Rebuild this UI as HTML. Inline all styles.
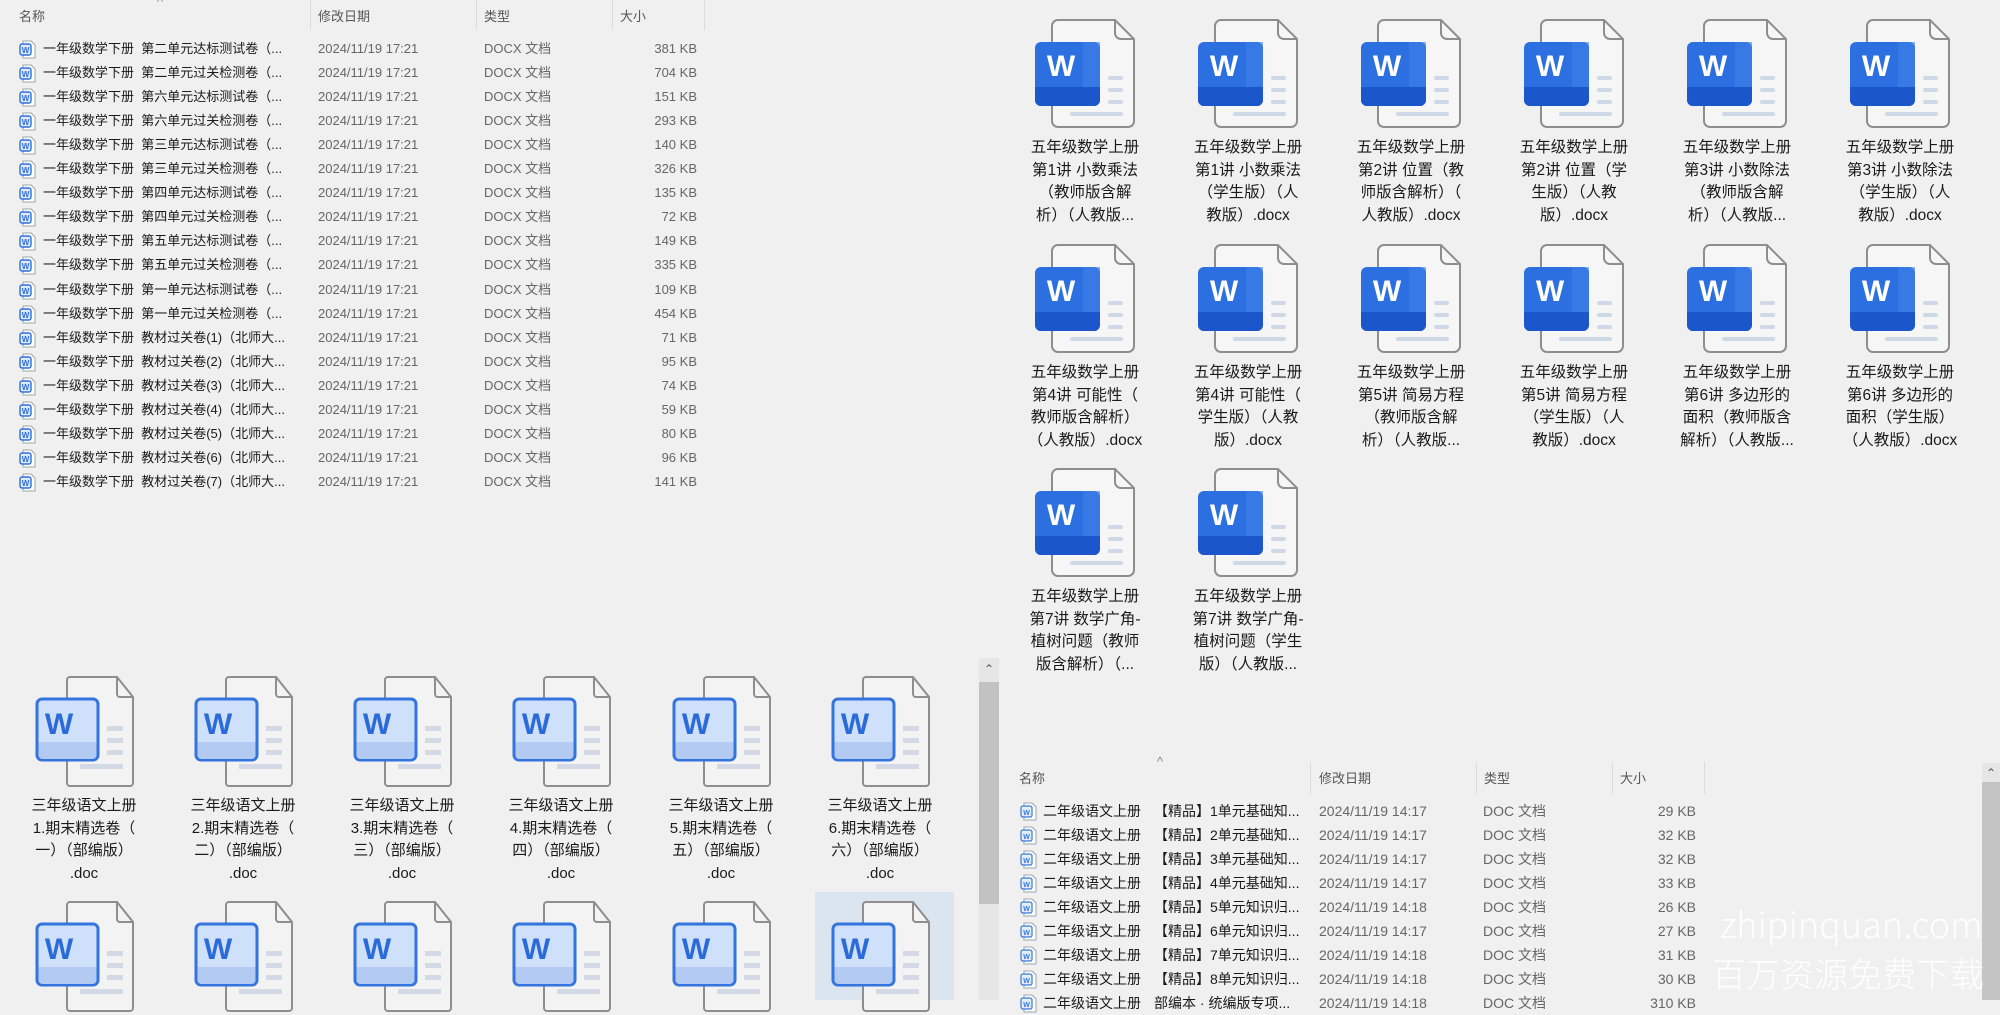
<!DOCTYPE html>
<html><head><meta charset="utf-8"><style>
*{margin:0;padding:0;box-sizing:border-box}
body{width:2000px;height:1000px;overflow:hidden;background:#f0f0f0;font-family:"Liberation Sans","Noto Sans CJK SC",sans-serif;position:relative;color:#1a1a1a}
.a{position:absolute}
.hd{position:absolute;font-size:13px;color:#555;white-space:nowrap}
.dv{position:absolute;width:1px;background:#dcdcdc}
.row{position:absolute;height:24px;line-height:24px;font-size:13px;white-space:nowrap}
.row svg{position:absolute;top:3px}
.row .n{position:absolute}
.row .d{position:absolute;color:#666}
.row .t{position:absolute;color:#666}
.row .s{position:absolute;text-align:right;color:#666}
.g{position:absolute;width:140px;text-align:center;font-size:15.5px;line-height:22.6px;white-space:nowrap;color:#1a1a1a}
.ic{position:absolute}
.wm{position:absolute;color:rgba(255,255,255,0.92);font-weight:300;white-space:nowrap}
</style></head><body>

<div class="hd" style="left:19px;top:6px">名称</div>
<div class="hd" style="left:157px;top:-6px;color:#888">^</div>
<div class="hd" style="left:318px;top:6px">修改日期</div>
<div class="hd" style="left:484px;top:6px">类型</div>
<div class="hd" style="left:620px;top:6px">大小</div>
<div class="dv" style="left:310px;top:0;height:30px"></div>
<div class="dv" style="left:476px;top:0;height:30px"></div>
<div class="dv" style="left:612px;top:0;height:30px"></div>
<div class="dv" style="left:704px;top:0;height:30px"></div>

<div class="a" style="left:0;top:37px;width:720px">
<div class="row" style="top:0px"><svg style="left:19px" width="17" height="19" viewBox="0 0 17 19"><path d="M4 1H12L16 5V18H4Z" fill="#fff" stroke="#9aa3ad"/><rect x="1" y="4" width="11" height="11" rx="2" fill="#dfe9fb" stroke="#2f6fdc" stroke-width="1.4"/><text x="6.5" y="13" font-size="8" font-weight="bold" fill="#2f6fdc" text-anchor="middle" font-family="Liberation Sans">W</text></svg><span class="n" style="left:43px">一年级数学下册&nbsp;&nbsp;第二单元达标测试卷（...</span><span class="d" style="left:318px">2024/11/19 17:21</span><span class="t" style="left:484px">DOCX 文档</span><span class="s" style="left:600px;width:97px">381 KB</span></div>
<div class="row" style="top:24.05px"><svg style="left:19px" width="17" height="19" viewBox="0 0 17 19"><path d="M4 1H12L16 5V18H4Z" fill="#fff" stroke="#9aa3ad"/><rect x="1" y="4" width="11" height="11" rx="2" fill="#dfe9fb" stroke="#2f6fdc" stroke-width="1.4"/><text x="6.5" y="13" font-size="8" font-weight="bold" fill="#2f6fdc" text-anchor="middle" font-family="Liberation Sans">W</text></svg><span class="n" style="left:43px">一年级数学下册&nbsp;&nbsp;第二单元过关检测卷（...</span><span class="d" style="left:318px">2024/11/19 17:21</span><span class="t" style="left:484px">DOCX 文档</span><span class="s" style="left:600px;width:97px">704 KB</span></div>
<div class="row" style="top:48.1px"><svg style="left:19px" width="17" height="19" viewBox="0 0 17 19"><path d="M4 1H12L16 5V18H4Z" fill="#fff" stroke="#9aa3ad"/><rect x="1" y="4" width="11" height="11" rx="2" fill="#dfe9fb" stroke="#2f6fdc" stroke-width="1.4"/><text x="6.5" y="13" font-size="8" font-weight="bold" fill="#2f6fdc" text-anchor="middle" font-family="Liberation Sans">W</text></svg><span class="n" style="left:43px">一年级数学下册&nbsp;&nbsp;第六单元达标测试卷（...</span><span class="d" style="left:318px">2024/11/19 17:21</span><span class="t" style="left:484px">DOCX 文档</span><span class="s" style="left:600px;width:97px">151 KB</span></div>
<div class="row" style="top:72.15px"><svg style="left:19px" width="17" height="19" viewBox="0 0 17 19"><path d="M4 1H12L16 5V18H4Z" fill="#fff" stroke="#9aa3ad"/><rect x="1" y="4" width="11" height="11" rx="2" fill="#dfe9fb" stroke="#2f6fdc" stroke-width="1.4"/><text x="6.5" y="13" font-size="8" font-weight="bold" fill="#2f6fdc" text-anchor="middle" font-family="Liberation Sans">W</text></svg><span class="n" style="left:43px">一年级数学下册&nbsp;&nbsp;第六单元过关检测卷（...</span><span class="d" style="left:318px">2024/11/19 17:21</span><span class="t" style="left:484px">DOCX 文档</span><span class="s" style="left:600px;width:97px">293 KB</span></div>
<div class="row" style="top:96.2px"><svg style="left:19px" width="17" height="19" viewBox="0 0 17 19"><path d="M4 1H12L16 5V18H4Z" fill="#fff" stroke="#9aa3ad"/><rect x="1" y="4" width="11" height="11" rx="2" fill="#dfe9fb" stroke="#2f6fdc" stroke-width="1.4"/><text x="6.5" y="13" font-size="8" font-weight="bold" fill="#2f6fdc" text-anchor="middle" font-family="Liberation Sans">W</text></svg><span class="n" style="left:43px">一年级数学下册&nbsp;&nbsp;第三单元达标测试卷（...</span><span class="d" style="left:318px">2024/11/19 17:21</span><span class="t" style="left:484px">DOCX 文档</span><span class="s" style="left:600px;width:97px">140 KB</span></div>
<div class="row" style="top:120.25px"><svg style="left:19px" width="17" height="19" viewBox="0 0 17 19"><path d="M4 1H12L16 5V18H4Z" fill="#fff" stroke="#9aa3ad"/><rect x="1" y="4" width="11" height="11" rx="2" fill="#dfe9fb" stroke="#2f6fdc" stroke-width="1.4"/><text x="6.5" y="13" font-size="8" font-weight="bold" fill="#2f6fdc" text-anchor="middle" font-family="Liberation Sans">W</text></svg><span class="n" style="left:43px">一年级数学下册&nbsp;&nbsp;第三单元过关检测卷（...</span><span class="d" style="left:318px">2024/11/19 17:21</span><span class="t" style="left:484px">DOCX 文档</span><span class="s" style="left:600px;width:97px">326 KB</span></div>
<div class="row" style="top:144.3px"><svg style="left:19px" width="17" height="19" viewBox="0 0 17 19"><path d="M4 1H12L16 5V18H4Z" fill="#fff" stroke="#9aa3ad"/><rect x="1" y="4" width="11" height="11" rx="2" fill="#dfe9fb" stroke="#2f6fdc" stroke-width="1.4"/><text x="6.5" y="13" font-size="8" font-weight="bold" fill="#2f6fdc" text-anchor="middle" font-family="Liberation Sans">W</text></svg><span class="n" style="left:43px">一年级数学下册&nbsp;&nbsp;第四单元达标测试卷（...</span><span class="d" style="left:318px">2024/11/19 17:21</span><span class="t" style="left:484px">DOCX 文档</span><span class="s" style="left:600px;width:97px">135 KB</span></div>
<div class="row" style="top:168.35px"><svg style="left:19px" width="17" height="19" viewBox="0 0 17 19"><path d="M4 1H12L16 5V18H4Z" fill="#fff" stroke="#9aa3ad"/><rect x="1" y="4" width="11" height="11" rx="2" fill="#dfe9fb" stroke="#2f6fdc" stroke-width="1.4"/><text x="6.5" y="13" font-size="8" font-weight="bold" fill="#2f6fdc" text-anchor="middle" font-family="Liberation Sans">W</text></svg><span class="n" style="left:43px">一年级数学下册&nbsp;&nbsp;第四单元过关检测卷（...</span><span class="d" style="left:318px">2024/11/19 17:21</span><span class="t" style="left:484px">DOCX 文档</span><span class="s" style="left:600px;width:97px">72 KB</span></div>
<div class="row" style="top:192.4px"><svg style="left:19px" width="17" height="19" viewBox="0 0 17 19"><path d="M4 1H12L16 5V18H4Z" fill="#fff" stroke="#9aa3ad"/><rect x="1" y="4" width="11" height="11" rx="2" fill="#dfe9fb" stroke="#2f6fdc" stroke-width="1.4"/><text x="6.5" y="13" font-size="8" font-weight="bold" fill="#2f6fdc" text-anchor="middle" font-family="Liberation Sans">W</text></svg><span class="n" style="left:43px">一年级数学下册&nbsp;&nbsp;第五单元达标测试卷（...</span><span class="d" style="left:318px">2024/11/19 17:21</span><span class="t" style="left:484px">DOCX 文档</span><span class="s" style="left:600px;width:97px">149 KB</span></div>
<div class="row" style="top:216.45px"><svg style="left:19px" width="17" height="19" viewBox="0 0 17 19"><path d="M4 1H12L16 5V18H4Z" fill="#fff" stroke="#9aa3ad"/><rect x="1" y="4" width="11" height="11" rx="2" fill="#dfe9fb" stroke="#2f6fdc" stroke-width="1.4"/><text x="6.5" y="13" font-size="8" font-weight="bold" fill="#2f6fdc" text-anchor="middle" font-family="Liberation Sans">W</text></svg><span class="n" style="left:43px">一年级数学下册&nbsp;&nbsp;第五单元过关检测卷（...</span><span class="d" style="left:318px">2024/11/19 17:21</span><span class="t" style="left:484px">DOCX 文档</span><span class="s" style="left:600px;width:97px">335 KB</span></div>
<div class="row" style="top:240.5px"><svg style="left:19px" width="17" height="19" viewBox="0 0 17 19"><path d="M4 1H12L16 5V18H4Z" fill="#fff" stroke="#9aa3ad"/><rect x="1" y="4" width="11" height="11" rx="2" fill="#dfe9fb" stroke="#2f6fdc" stroke-width="1.4"/><text x="6.5" y="13" font-size="8" font-weight="bold" fill="#2f6fdc" text-anchor="middle" font-family="Liberation Sans">W</text></svg><span class="n" style="left:43px">一年级数学下册&nbsp;&nbsp;第一单元达标测试卷（...</span><span class="d" style="left:318px">2024/11/19 17:21</span><span class="t" style="left:484px">DOCX 文档</span><span class="s" style="left:600px;width:97px">109 KB</span></div>
<div class="row" style="top:264.55px"><svg style="left:19px" width="17" height="19" viewBox="0 0 17 19"><path d="M4 1H12L16 5V18H4Z" fill="#fff" stroke="#9aa3ad"/><rect x="1" y="4" width="11" height="11" rx="2" fill="#dfe9fb" stroke="#2f6fdc" stroke-width="1.4"/><text x="6.5" y="13" font-size="8" font-weight="bold" fill="#2f6fdc" text-anchor="middle" font-family="Liberation Sans">W</text></svg><span class="n" style="left:43px">一年级数学下册&nbsp;&nbsp;第一单元过关检测卷（...</span><span class="d" style="left:318px">2024/11/19 17:21</span><span class="t" style="left:484px">DOCX 文档</span><span class="s" style="left:600px;width:97px">454 KB</span></div>
<div class="row" style="top:288.6px"><svg style="left:19px" width="17" height="19" viewBox="0 0 17 19"><path d="M4 1H12L16 5V18H4Z" fill="#fff" stroke="#9aa3ad"/><rect x="1" y="4" width="11" height="11" rx="2" fill="#dfe9fb" stroke="#2f6fdc" stroke-width="1.4"/><text x="6.5" y="13" font-size="8" font-weight="bold" fill="#2f6fdc" text-anchor="middle" font-family="Liberation Sans">W</text></svg><span class="n" style="left:43px">一年级数学下册&nbsp;&nbsp;教材过关卷(1)（北师大...</span><span class="d" style="left:318px">2024/11/19 17:21</span><span class="t" style="left:484px">DOCX 文档</span><span class="s" style="left:600px;width:97px">71 KB</span></div>
<div class="row" style="top:312.65px"><svg style="left:19px" width="17" height="19" viewBox="0 0 17 19"><path d="M4 1H12L16 5V18H4Z" fill="#fff" stroke="#9aa3ad"/><rect x="1" y="4" width="11" height="11" rx="2" fill="#dfe9fb" stroke="#2f6fdc" stroke-width="1.4"/><text x="6.5" y="13" font-size="8" font-weight="bold" fill="#2f6fdc" text-anchor="middle" font-family="Liberation Sans">W</text></svg><span class="n" style="left:43px">一年级数学下册&nbsp;&nbsp;教材过关卷(2)（北师大...</span><span class="d" style="left:318px">2024/11/19 17:21</span><span class="t" style="left:484px">DOCX 文档</span><span class="s" style="left:600px;width:97px">95 KB</span></div>
<div class="row" style="top:336.7px"><svg style="left:19px" width="17" height="19" viewBox="0 0 17 19"><path d="M4 1H12L16 5V18H4Z" fill="#fff" stroke="#9aa3ad"/><rect x="1" y="4" width="11" height="11" rx="2" fill="#dfe9fb" stroke="#2f6fdc" stroke-width="1.4"/><text x="6.5" y="13" font-size="8" font-weight="bold" fill="#2f6fdc" text-anchor="middle" font-family="Liberation Sans">W</text></svg><span class="n" style="left:43px">一年级数学下册&nbsp;&nbsp;教材过关卷(3)（北师大...</span><span class="d" style="left:318px">2024/11/19 17:21</span><span class="t" style="left:484px">DOCX 文档</span><span class="s" style="left:600px;width:97px">74 KB</span></div>
<div class="row" style="top:360.75px"><svg style="left:19px" width="17" height="19" viewBox="0 0 17 19"><path d="M4 1H12L16 5V18H4Z" fill="#fff" stroke="#9aa3ad"/><rect x="1" y="4" width="11" height="11" rx="2" fill="#dfe9fb" stroke="#2f6fdc" stroke-width="1.4"/><text x="6.5" y="13" font-size="8" font-weight="bold" fill="#2f6fdc" text-anchor="middle" font-family="Liberation Sans">W</text></svg><span class="n" style="left:43px">一年级数学下册&nbsp;&nbsp;教材过关卷(4)（北师大...</span><span class="d" style="left:318px">2024/11/19 17:21</span><span class="t" style="left:484px">DOCX 文档</span><span class="s" style="left:600px;width:97px">59 KB</span></div>
<div class="row" style="top:384.8px"><svg style="left:19px" width="17" height="19" viewBox="0 0 17 19"><path d="M4 1H12L16 5V18H4Z" fill="#fff" stroke="#9aa3ad"/><rect x="1" y="4" width="11" height="11" rx="2" fill="#dfe9fb" stroke="#2f6fdc" stroke-width="1.4"/><text x="6.5" y="13" font-size="8" font-weight="bold" fill="#2f6fdc" text-anchor="middle" font-family="Liberation Sans">W</text></svg><span class="n" style="left:43px">一年级数学下册&nbsp;&nbsp;教材过关卷(5)（北师大...</span><span class="d" style="left:318px">2024/11/19 17:21</span><span class="t" style="left:484px">DOCX 文档</span><span class="s" style="left:600px;width:97px">80 KB</span></div>
<div class="row" style="top:408.85px"><svg style="left:19px" width="17" height="19" viewBox="0 0 17 19"><path d="M4 1H12L16 5V18H4Z" fill="#fff" stroke="#9aa3ad"/><rect x="1" y="4" width="11" height="11" rx="2" fill="#dfe9fb" stroke="#2f6fdc" stroke-width="1.4"/><text x="6.5" y="13" font-size="8" font-weight="bold" fill="#2f6fdc" text-anchor="middle" font-family="Liberation Sans">W</text></svg><span class="n" style="left:43px">一年级数学下册&nbsp;&nbsp;教材过关卷(6)（北师大...</span><span class="d" style="left:318px">2024/11/19 17:21</span><span class="t" style="left:484px">DOCX 文档</span><span class="s" style="left:600px;width:97px">96 KB</span></div>
<div class="row" style="top:432.9px"><svg style="left:19px" width="17" height="19" viewBox="0 0 17 19"><path d="M4 1H12L16 5V18H4Z" fill="#fff" stroke="#9aa3ad"/><rect x="1" y="4" width="11" height="11" rx="2" fill="#dfe9fb" stroke="#2f6fdc" stroke-width="1.4"/><text x="6.5" y="13" font-size="8" font-weight="bold" fill="#2f6fdc" text-anchor="middle" font-family="Liberation Sans">W</text></svg><span class="n" style="left:43px">一年级数学下册&nbsp;&nbsp;教材过关卷(7)（北师大...</span><span class="d" style="left:318px">2024/11/19 17:21</span><span class="t" style="left:484px">DOCX 文档</span><span class="s" style="left:600px;width:97px">141 KB</span></div>
</div>

<div class="a" style="left:0;top:0">
<svg class="ic" style="left:1035px;top:19px" width="100" height="110" viewBox="0 0 100 110"><path d="M17 7a6 6 0 0 1 6-6H80L99 20V102a6 6 0 0 1-6 6H23a6 6 0 0 1-6-6Z" fill="#f6f6f6" stroke="#8e8e8e" stroke-width="2"/><path d="M80 1V14a6 6 0 0 0 6 6H99" fill="none" stroke="#8e8e8e" stroke-width="2"/><g fill="#cfd8e6"><rect x="73" y="57" width="15" height="4" rx="2"/><rect x="73" y="69" width="15" height="4" rx="2"/><rect x="73" y="81" width="15" height="4" rx="2"/><rect x="35" y="93" width="53" height="4" rx="2"/></g><rect x="0" y="23" width="65" height="64" rx="6" fill="#2c6fe0"/><path d="M0 68H65V81a6 6 0 0 1-6 6H6a6 6 0 0 1-6-6Z" fill="#1b56cb"/><rect x="48" y="23" width="17" height="45" fill="#3f80e8" opacity=".6"/><text x="26" y="57" font-size="30" font-weight="bold" fill="#fff" text-anchor="middle" font-family="Liberation Sans">W</text></svg>
<svg class="ic" style="left:1198px;top:19px" width="100" height="110" viewBox="0 0 100 110"><path d="M17 7a6 6 0 0 1 6-6H80L99 20V102a6 6 0 0 1-6 6H23a6 6 0 0 1-6-6Z" fill="#f6f6f6" stroke="#8e8e8e" stroke-width="2"/><path d="M80 1V14a6 6 0 0 0 6 6H99" fill="none" stroke="#8e8e8e" stroke-width="2"/><g fill="#cfd8e6"><rect x="73" y="57" width="15" height="4" rx="2"/><rect x="73" y="69" width="15" height="4" rx="2"/><rect x="73" y="81" width="15" height="4" rx="2"/><rect x="35" y="93" width="53" height="4" rx="2"/></g><rect x="0" y="23" width="65" height="64" rx="6" fill="#2c6fe0"/><path d="M0 68H65V81a6 6 0 0 1-6 6H6a6 6 0 0 1-6-6Z" fill="#1b56cb"/><rect x="48" y="23" width="17" height="45" fill="#3f80e8" opacity=".6"/><text x="26" y="57" font-size="30" font-weight="bold" fill="#fff" text-anchor="middle" font-family="Liberation Sans">W</text></svg>
<svg class="ic" style="left:1361px;top:19px" width="100" height="110" viewBox="0 0 100 110"><path d="M17 7a6 6 0 0 1 6-6H80L99 20V102a6 6 0 0 1-6 6H23a6 6 0 0 1-6-6Z" fill="#f6f6f6" stroke="#8e8e8e" stroke-width="2"/><path d="M80 1V14a6 6 0 0 0 6 6H99" fill="none" stroke="#8e8e8e" stroke-width="2"/><g fill="#cfd8e6"><rect x="73" y="57" width="15" height="4" rx="2"/><rect x="73" y="69" width="15" height="4" rx="2"/><rect x="73" y="81" width="15" height="4" rx="2"/><rect x="35" y="93" width="53" height="4" rx="2"/></g><rect x="0" y="23" width="65" height="64" rx="6" fill="#2c6fe0"/><path d="M0 68H65V81a6 6 0 0 1-6 6H6a6 6 0 0 1-6-6Z" fill="#1b56cb"/><rect x="48" y="23" width="17" height="45" fill="#3f80e8" opacity=".6"/><text x="26" y="57" font-size="30" font-weight="bold" fill="#fff" text-anchor="middle" font-family="Liberation Sans">W</text></svg>
<svg class="ic" style="left:1524px;top:19px" width="100" height="110" viewBox="0 0 100 110"><path d="M17 7a6 6 0 0 1 6-6H80L99 20V102a6 6 0 0 1-6 6H23a6 6 0 0 1-6-6Z" fill="#f6f6f6" stroke="#8e8e8e" stroke-width="2"/><path d="M80 1V14a6 6 0 0 0 6 6H99" fill="none" stroke="#8e8e8e" stroke-width="2"/><g fill="#cfd8e6"><rect x="73" y="57" width="15" height="4" rx="2"/><rect x="73" y="69" width="15" height="4" rx="2"/><rect x="73" y="81" width="15" height="4" rx="2"/><rect x="35" y="93" width="53" height="4" rx="2"/></g><rect x="0" y="23" width="65" height="64" rx="6" fill="#2c6fe0"/><path d="M0 68H65V81a6 6 0 0 1-6 6H6a6 6 0 0 1-6-6Z" fill="#1b56cb"/><rect x="48" y="23" width="17" height="45" fill="#3f80e8" opacity=".6"/><text x="26" y="57" font-size="30" font-weight="bold" fill="#fff" text-anchor="middle" font-family="Liberation Sans">W</text></svg>
<svg class="ic" style="left:1687px;top:19px" width="100" height="110" viewBox="0 0 100 110"><path d="M17 7a6 6 0 0 1 6-6H80L99 20V102a6 6 0 0 1-6 6H23a6 6 0 0 1-6-6Z" fill="#f6f6f6" stroke="#8e8e8e" stroke-width="2"/><path d="M80 1V14a6 6 0 0 0 6 6H99" fill="none" stroke="#8e8e8e" stroke-width="2"/><g fill="#cfd8e6"><rect x="73" y="57" width="15" height="4" rx="2"/><rect x="73" y="69" width="15" height="4" rx="2"/><rect x="73" y="81" width="15" height="4" rx="2"/><rect x="35" y="93" width="53" height="4" rx="2"/></g><rect x="0" y="23" width="65" height="64" rx="6" fill="#2c6fe0"/><path d="M0 68H65V81a6 6 0 0 1-6 6H6a6 6 0 0 1-6-6Z" fill="#1b56cb"/><rect x="48" y="23" width="17" height="45" fill="#3f80e8" opacity=".6"/><text x="26" y="57" font-size="30" font-weight="bold" fill="#fff" text-anchor="middle" font-family="Liberation Sans">W</text></svg>
<svg class="ic" style="left:1850px;top:19px" width="100" height="110" viewBox="0 0 100 110"><path d="M17 7a6 6 0 0 1 6-6H80L99 20V102a6 6 0 0 1-6 6H23a6 6 0 0 1-6-6Z" fill="#f6f6f6" stroke="#8e8e8e" stroke-width="2"/><path d="M80 1V14a6 6 0 0 0 6 6H99" fill="none" stroke="#8e8e8e" stroke-width="2"/><g fill="#cfd8e6"><rect x="73" y="57" width="15" height="4" rx="2"/><rect x="73" y="69" width="15" height="4" rx="2"/><rect x="73" y="81" width="15" height="4" rx="2"/><rect x="35" y="93" width="53" height="4" rx="2"/></g><rect x="0" y="23" width="65" height="64" rx="6" fill="#2c6fe0"/><path d="M0 68H65V81a6 6 0 0 1-6 6H6a6 6 0 0 1-6-6Z" fill="#1b56cb"/><rect x="48" y="23" width="17" height="45" fill="#3f80e8" opacity=".6"/><text x="26" y="57" font-size="30" font-weight="bold" fill="#fff" text-anchor="middle" font-family="Liberation Sans">W</text></svg>
<svg class="ic" style="left:1035px;top:244px" width="100" height="110" viewBox="0 0 100 110"><path d="M17 7a6 6 0 0 1 6-6H80L99 20V102a6 6 0 0 1-6 6H23a6 6 0 0 1-6-6Z" fill="#f6f6f6" stroke="#8e8e8e" stroke-width="2"/><path d="M80 1V14a6 6 0 0 0 6 6H99" fill="none" stroke="#8e8e8e" stroke-width="2"/><g fill="#cfd8e6"><rect x="73" y="57" width="15" height="4" rx="2"/><rect x="73" y="69" width="15" height="4" rx="2"/><rect x="73" y="81" width="15" height="4" rx="2"/><rect x="35" y="93" width="53" height="4" rx="2"/></g><rect x="0" y="23" width="65" height="64" rx="6" fill="#2c6fe0"/><path d="M0 68H65V81a6 6 0 0 1-6 6H6a6 6 0 0 1-6-6Z" fill="#1b56cb"/><rect x="48" y="23" width="17" height="45" fill="#3f80e8" opacity=".6"/><text x="26" y="57" font-size="30" font-weight="bold" fill="#fff" text-anchor="middle" font-family="Liberation Sans">W</text></svg>
<svg class="ic" style="left:1198px;top:244px" width="100" height="110" viewBox="0 0 100 110"><path d="M17 7a6 6 0 0 1 6-6H80L99 20V102a6 6 0 0 1-6 6H23a6 6 0 0 1-6-6Z" fill="#f6f6f6" stroke="#8e8e8e" stroke-width="2"/><path d="M80 1V14a6 6 0 0 0 6 6H99" fill="none" stroke="#8e8e8e" stroke-width="2"/><g fill="#cfd8e6"><rect x="73" y="57" width="15" height="4" rx="2"/><rect x="73" y="69" width="15" height="4" rx="2"/><rect x="73" y="81" width="15" height="4" rx="2"/><rect x="35" y="93" width="53" height="4" rx="2"/></g><rect x="0" y="23" width="65" height="64" rx="6" fill="#2c6fe0"/><path d="M0 68H65V81a6 6 0 0 1-6 6H6a6 6 0 0 1-6-6Z" fill="#1b56cb"/><rect x="48" y="23" width="17" height="45" fill="#3f80e8" opacity=".6"/><text x="26" y="57" font-size="30" font-weight="bold" fill="#fff" text-anchor="middle" font-family="Liberation Sans">W</text></svg>
<svg class="ic" style="left:1361px;top:244px" width="100" height="110" viewBox="0 0 100 110"><path d="M17 7a6 6 0 0 1 6-6H80L99 20V102a6 6 0 0 1-6 6H23a6 6 0 0 1-6-6Z" fill="#f6f6f6" stroke="#8e8e8e" stroke-width="2"/><path d="M80 1V14a6 6 0 0 0 6 6H99" fill="none" stroke="#8e8e8e" stroke-width="2"/><g fill="#cfd8e6"><rect x="73" y="57" width="15" height="4" rx="2"/><rect x="73" y="69" width="15" height="4" rx="2"/><rect x="73" y="81" width="15" height="4" rx="2"/><rect x="35" y="93" width="53" height="4" rx="2"/></g><rect x="0" y="23" width="65" height="64" rx="6" fill="#2c6fe0"/><path d="M0 68H65V81a6 6 0 0 1-6 6H6a6 6 0 0 1-6-6Z" fill="#1b56cb"/><rect x="48" y="23" width="17" height="45" fill="#3f80e8" opacity=".6"/><text x="26" y="57" font-size="30" font-weight="bold" fill="#fff" text-anchor="middle" font-family="Liberation Sans">W</text></svg>
<svg class="ic" style="left:1524px;top:244px" width="100" height="110" viewBox="0 0 100 110"><path d="M17 7a6 6 0 0 1 6-6H80L99 20V102a6 6 0 0 1-6 6H23a6 6 0 0 1-6-6Z" fill="#f6f6f6" stroke="#8e8e8e" stroke-width="2"/><path d="M80 1V14a6 6 0 0 0 6 6H99" fill="none" stroke="#8e8e8e" stroke-width="2"/><g fill="#cfd8e6"><rect x="73" y="57" width="15" height="4" rx="2"/><rect x="73" y="69" width="15" height="4" rx="2"/><rect x="73" y="81" width="15" height="4" rx="2"/><rect x="35" y="93" width="53" height="4" rx="2"/></g><rect x="0" y="23" width="65" height="64" rx="6" fill="#2c6fe0"/><path d="M0 68H65V81a6 6 0 0 1-6 6H6a6 6 0 0 1-6-6Z" fill="#1b56cb"/><rect x="48" y="23" width="17" height="45" fill="#3f80e8" opacity=".6"/><text x="26" y="57" font-size="30" font-weight="bold" fill="#fff" text-anchor="middle" font-family="Liberation Sans">W</text></svg>
<svg class="ic" style="left:1687px;top:244px" width="100" height="110" viewBox="0 0 100 110"><path d="M17 7a6 6 0 0 1 6-6H80L99 20V102a6 6 0 0 1-6 6H23a6 6 0 0 1-6-6Z" fill="#f6f6f6" stroke="#8e8e8e" stroke-width="2"/><path d="M80 1V14a6 6 0 0 0 6 6H99" fill="none" stroke="#8e8e8e" stroke-width="2"/><g fill="#cfd8e6"><rect x="73" y="57" width="15" height="4" rx="2"/><rect x="73" y="69" width="15" height="4" rx="2"/><rect x="73" y="81" width="15" height="4" rx="2"/><rect x="35" y="93" width="53" height="4" rx="2"/></g><rect x="0" y="23" width="65" height="64" rx="6" fill="#2c6fe0"/><path d="M0 68H65V81a6 6 0 0 1-6 6H6a6 6 0 0 1-6-6Z" fill="#1b56cb"/><rect x="48" y="23" width="17" height="45" fill="#3f80e8" opacity=".6"/><text x="26" y="57" font-size="30" font-weight="bold" fill="#fff" text-anchor="middle" font-family="Liberation Sans">W</text></svg>
<svg class="ic" style="left:1850px;top:244px" width="100" height="110" viewBox="0 0 100 110"><path d="M17 7a6 6 0 0 1 6-6H80L99 20V102a6 6 0 0 1-6 6H23a6 6 0 0 1-6-6Z" fill="#f6f6f6" stroke="#8e8e8e" stroke-width="2"/><path d="M80 1V14a6 6 0 0 0 6 6H99" fill="none" stroke="#8e8e8e" stroke-width="2"/><g fill="#cfd8e6"><rect x="73" y="57" width="15" height="4" rx="2"/><rect x="73" y="69" width="15" height="4" rx="2"/><rect x="73" y="81" width="15" height="4" rx="2"/><rect x="35" y="93" width="53" height="4" rx="2"/></g><rect x="0" y="23" width="65" height="64" rx="6" fill="#2c6fe0"/><path d="M0 68H65V81a6 6 0 0 1-6 6H6a6 6 0 0 1-6-6Z" fill="#1b56cb"/><rect x="48" y="23" width="17" height="45" fill="#3f80e8" opacity=".6"/><text x="26" y="57" font-size="30" font-weight="bold" fill="#fff" text-anchor="middle" font-family="Liberation Sans">W</text></svg>
<svg class="ic" style="left:1035px;top:468px" width="100" height="110" viewBox="0 0 100 110"><path d="M17 7a6 6 0 0 1 6-6H80L99 20V102a6 6 0 0 1-6 6H23a6 6 0 0 1-6-6Z" fill="#f6f6f6" stroke="#8e8e8e" stroke-width="2"/><path d="M80 1V14a6 6 0 0 0 6 6H99" fill="none" stroke="#8e8e8e" stroke-width="2"/><g fill="#cfd8e6"><rect x="73" y="57" width="15" height="4" rx="2"/><rect x="73" y="69" width="15" height="4" rx="2"/><rect x="73" y="81" width="15" height="4" rx="2"/><rect x="35" y="93" width="53" height="4" rx="2"/></g><rect x="0" y="23" width="65" height="64" rx="6" fill="#2c6fe0"/><path d="M0 68H65V81a6 6 0 0 1-6 6H6a6 6 0 0 1-6-6Z" fill="#1b56cb"/><rect x="48" y="23" width="17" height="45" fill="#3f80e8" opacity=".6"/><text x="26" y="57" font-size="30" font-weight="bold" fill="#fff" text-anchor="middle" font-family="Liberation Sans">W</text></svg>
<svg class="ic" style="left:1198px;top:468px" width="100" height="110" viewBox="0 0 100 110"><path d="M17 7a6 6 0 0 1 6-6H80L99 20V102a6 6 0 0 1-6 6H23a6 6 0 0 1-6-6Z" fill="#f6f6f6" stroke="#8e8e8e" stroke-width="2"/><path d="M80 1V14a6 6 0 0 0 6 6H99" fill="none" stroke="#8e8e8e" stroke-width="2"/><g fill="#cfd8e6"><rect x="73" y="57" width="15" height="4" rx="2"/><rect x="73" y="69" width="15" height="4" rx="2"/><rect x="73" y="81" width="15" height="4" rx="2"/><rect x="35" y="93" width="53" height="4" rx="2"/></g><rect x="0" y="23" width="65" height="64" rx="6" fill="#2c6fe0"/><path d="M0 68H65V81a6 6 0 0 1-6 6H6a6 6 0 0 1-6-6Z" fill="#1b56cb"/><rect x="48" y="23" width="17" height="45" fill="#3f80e8" opacity=".6"/><text x="26" y="57" font-size="30" font-weight="bold" fill="#fff" text-anchor="middle" font-family="Liberation Sans">W</text></svg>
</div>

<div class="g" style="left:1015px;top:137px">五年级数学上册<br>第1讲 小数乘法<br>（教师版含解<br>析）（人教版...</div>
<div class="g" style="left:1178px;top:137px">五年级数学上册<br>第1讲 小数乘法<br>（学生版）（人<br>教版）.docx</div>
<div class="g" style="left:1341px;top:137px">五年级数学上册<br>第2讲 位置（教<br>师版含解析）（<br>人教版）.docx</div>
<div class="g" style="left:1504px;top:137px">五年级数学上册<br>第2讲 位置（学<br>生版）（人教<br>版）.docx</div>
<div class="g" style="left:1667px;top:137px">五年级数学上册<br>第3讲 小数除法<br>（教师版含解<br>析）（人教版...</div>
<div class="g" style="left:1830px;top:137px">五年级数学上册<br>第3讲 小数除法<br>（学生版）（人<br>教版）.docx</div>

<div class="g" style="left:1015px;top:362px">五年级数学上册<br>第4讲 可能性（<br>教师版含解析）<br>（人教版）.docx</div>
<div class="g" style="left:1178px;top:362px">五年级数学上册<br>第4讲 可能性（<br>学生版）（人教<br>版）.docx</div>
<div class="g" style="left:1341px;top:362px">五年级数学上册<br>第5讲 简易方程<br>（教师版含解<br>析）（人教版...</div>
<div class="g" style="left:1504px;top:362px">五年级数学上册<br>第5讲 简易方程<br>（学生版）（人<br>教版）.docx</div>
<div class="g" style="left:1667px;top:362px">五年级数学上册<br>第6讲 多边形的<br>面积（教师版含<br>解析）（人教版...</div>
<div class="g" style="left:1830px;top:362px">五年级数学上册<br>第6讲 多边形的<br>面积（学生版）<br>（人教版）.docx</div>

<div class="g" style="left:1015px;top:586px">五年级数学上册<br>第7讲 数学广角-<br>植树问题（教师<br>版含解析）（...</div>
<div class="g" style="left:1178px;top:586px">五年级数学上册<br>第7讲 数学广角-<br>植树问题（学生<br>版）（人教版...</div>

<div class="a" style="left:815px;top:892px;width:139px;height:108px;background:#dae5f0"></div>
<div class="a" style="left:0;top:0">
<svg class="ic" style="left:35px;top:676px" width="100" height="112" viewBox="0 0 100 112"><path d="M32 4a3 3 0 0 1 3-3H82L98 21V107a3 3 0 0 1-3 3H35a3 3 0 0 1-3-3Z" fill="#f3f3f3" stroke="#8e8e8e" stroke-width="2"/><path d="M82 1V18a3 3 0 0 0 3 3H98" fill="none" stroke="#8e8e8e" stroke-width="2"/><g fill="#d3dae5"><rect x="72" y="50" width="16" height="5"/><rect x="72" y="62" width="16" height="5"/><rect x="72" y="74" width="16" height="5"/><rect x="45" y="88" width="43" height="5"/></g><rect x="2" y="23" width="61" height="61" rx="5" fill="#cfe0fa" stroke="#3374de" stroke-width="3"/><path d="M3.5 66H61.5V79a4 4 0 0 1-4 4H7.5a4 4 0 0 1-4-4Z" fill="#b3cbf2"/><text x="24" y="58" font-size="30" font-weight="bold" fill="#2a6ad9" text-anchor="middle" font-family="Liberation Sans">W</text></svg>
<svg class="ic" style="left:194px;top:676px" width="100" height="112" viewBox="0 0 100 112"><path d="M32 4a3 3 0 0 1 3-3H82L98 21V107a3 3 0 0 1-3 3H35a3 3 0 0 1-3-3Z" fill="#f3f3f3" stroke="#8e8e8e" stroke-width="2"/><path d="M82 1V18a3 3 0 0 0 3 3H98" fill="none" stroke="#8e8e8e" stroke-width="2"/><g fill="#d3dae5"><rect x="72" y="50" width="16" height="5"/><rect x="72" y="62" width="16" height="5"/><rect x="72" y="74" width="16" height="5"/><rect x="45" y="88" width="43" height="5"/></g><rect x="2" y="23" width="61" height="61" rx="5" fill="#cfe0fa" stroke="#3374de" stroke-width="3"/><path d="M3.5 66H61.5V79a4 4 0 0 1-4 4H7.5a4 4 0 0 1-4-4Z" fill="#b3cbf2"/><text x="24" y="58" font-size="30" font-weight="bold" fill="#2a6ad9" text-anchor="middle" font-family="Liberation Sans">W</text></svg>
<svg class="ic" style="left:353px;top:676px" width="100" height="112" viewBox="0 0 100 112"><path d="M32 4a3 3 0 0 1 3-3H82L98 21V107a3 3 0 0 1-3 3H35a3 3 0 0 1-3-3Z" fill="#f3f3f3" stroke="#8e8e8e" stroke-width="2"/><path d="M82 1V18a3 3 0 0 0 3 3H98" fill="none" stroke="#8e8e8e" stroke-width="2"/><g fill="#d3dae5"><rect x="72" y="50" width="16" height="5"/><rect x="72" y="62" width="16" height="5"/><rect x="72" y="74" width="16" height="5"/><rect x="45" y="88" width="43" height="5"/></g><rect x="2" y="23" width="61" height="61" rx="5" fill="#cfe0fa" stroke="#3374de" stroke-width="3"/><path d="M3.5 66H61.5V79a4 4 0 0 1-4 4H7.5a4 4 0 0 1-4-4Z" fill="#b3cbf2"/><text x="24" y="58" font-size="30" font-weight="bold" fill="#2a6ad9" text-anchor="middle" font-family="Liberation Sans">W</text></svg>
<svg class="ic" style="left:512px;top:676px" width="100" height="112" viewBox="0 0 100 112"><path d="M32 4a3 3 0 0 1 3-3H82L98 21V107a3 3 0 0 1-3 3H35a3 3 0 0 1-3-3Z" fill="#f3f3f3" stroke="#8e8e8e" stroke-width="2"/><path d="M82 1V18a3 3 0 0 0 3 3H98" fill="none" stroke="#8e8e8e" stroke-width="2"/><g fill="#d3dae5"><rect x="72" y="50" width="16" height="5"/><rect x="72" y="62" width="16" height="5"/><rect x="72" y="74" width="16" height="5"/><rect x="45" y="88" width="43" height="5"/></g><rect x="2" y="23" width="61" height="61" rx="5" fill="#cfe0fa" stroke="#3374de" stroke-width="3"/><path d="M3.5 66H61.5V79a4 4 0 0 1-4 4H7.5a4 4 0 0 1-4-4Z" fill="#b3cbf2"/><text x="24" y="58" font-size="30" font-weight="bold" fill="#2a6ad9" text-anchor="middle" font-family="Liberation Sans">W</text></svg>
<svg class="ic" style="left:672px;top:676px" width="100" height="112" viewBox="0 0 100 112"><path d="M32 4a3 3 0 0 1 3-3H82L98 21V107a3 3 0 0 1-3 3H35a3 3 0 0 1-3-3Z" fill="#f3f3f3" stroke="#8e8e8e" stroke-width="2"/><path d="M82 1V18a3 3 0 0 0 3 3H98" fill="none" stroke="#8e8e8e" stroke-width="2"/><g fill="#d3dae5"><rect x="72" y="50" width="16" height="5"/><rect x="72" y="62" width="16" height="5"/><rect x="72" y="74" width="16" height="5"/><rect x="45" y="88" width="43" height="5"/></g><rect x="2" y="23" width="61" height="61" rx="5" fill="#cfe0fa" stroke="#3374de" stroke-width="3"/><path d="M3.5 66H61.5V79a4 4 0 0 1-4 4H7.5a4 4 0 0 1-4-4Z" fill="#b3cbf2"/><text x="24" y="58" font-size="30" font-weight="bold" fill="#2a6ad9" text-anchor="middle" font-family="Liberation Sans">W</text></svg>
<svg class="ic" style="left:831px;top:676px" width="100" height="112" viewBox="0 0 100 112"><path d="M32 4a3 3 0 0 1 3-3H82L98 21V107a3 3 0 0 1-3 3H35a3 3 0 0 1-3-3Z" fill="#f3f3f3" stroke="#8e8e8e" stroke-width="2"/><path d="M82 1V18a3 3 0 0 0 3 3H98" fill="none" stroke="#8e8e8e" stroke-width="2"/><g fill="#d3dae5"><rect x="72" y="50" width="16" height="5"/><rect x="72" y="62" width="16" height="5"/><rect x="72" y="74" width="16" height="5"/><rect x="45" y="88" width="43" height="5"/></g><rect x="2" y="23" width="61" height="61" rx="5" fill="#cfe0fa" stroke="#3374de" stroke-width="3"/><path d="M3.5 66H61.5V79a4 4 0 0 1-4 4H7.5a4 4 0 0 1-4-4Z" fill="#b3cbf2"/><text x="24" y="58" font-size="30" font-weight="bold" fill="#2a6ad9" text-anchor="middle" font-family="Liberation Sans">W</text></svg>
<svg class="ic" style="left:35px;top:901px" width="100" height="112" viewBox="0 0 100 112"><path d="M32 4a3 3 0 0 1 3-3H82L98 21V107a3 3 0 0 1-3 3H35a3 3 0 0 1-3-3Z" fill="#f3f3f3" stroke="#8e8e8e" stroke-width="2"/><path d="M82 1V18a3 3 0 0 0 3 3H98" fill="none" stroke="#8e8e8e" stroke-width="2"/><g fill="#d3dae5"><rect x="72" y="50" width="16" height="5"/><rect x="72" y="62" width="16" height="5"/><rect x="72" y="74" width="16" height="5"/><rect x="45" y="88" width="43" height="5"/></g><rect x="2" y="23" width="61" height="61" rx="5" fill="#cfe0fa" stroke="#3374de" stroke-width="3"/><path d="M3.5 66H61.5V79a4 4 0 0 1-4 4H7.5a4 4 0 0 1-4-4Z" fill="#b3cbf2"/><text x="24" y="58" font-size="30" font-weight="bold" fill="#2a6ad9" text-anchor="middle" font-family="Liberation Sans">W</text></svg>
<svg class="ic" style="left:194px;top:901px" width="100" height="112" viewBox="0 0 100 112"><path d="M32 4a3 3 0 0 1 3-3H82L98 21V107a3 3 0 0 1-3 3H35a3 3 0 0 1-3-3Z" fill="#f3f3f3" stroke="#8e8e8e" stroke-width="2"/><path d="M82 1V18a3 3 0 0 0 3 3H98" fill="none" stroke="#8e8e8e" stroke-width="2"/><g fill="#d3dae5"><rect x="72" y="50" width="16" height="5"/><rect x="72" y="62" width="16" height="5"/><rect x="72" y="74" width="16" height="5"/><rect x="45" y="88" width="43" height="5"/></g><rect x="2" y="23" width="61" height="61" rx="5" fill="#cfe0fa" stroke="#3374de" stroke-width="3"/><path d="M3.5 66H61.5V79a4 4 0 0 1-4 4H7.5a4 4 0 0 1-4-4Z" fill="#b3cbf2"/><text x="24" y="58" font-size="30" font-weight="bold" fill="#2a6ad9" text-anchor="middle" font-family="Liberation Sans">W</text></svg>
<svg class="ic" style="left:353px;top:901px" width="100" height="112" viewBox="0 0 100 112"><path d="M32 4a3 3 0 0 1 3-3H82L98 21V107a3 3 0 0 1-3 3H35a3 3 0 0 1-3-3Z" fill="#f3f3f3" stroke="#8e8e8e" stroke-width="2"/><path d="M82 1V18a3 3 0 0 0 3 3H98" fill="none" stroke="#8e8e8e" stroke-width="2"/><g fill="#d3dae5"><rect x="72" y="50" width="16" height="5"/><rect x="72" y="62" width="16" height="5"/><rect x="72" y="74" width="16" height="5"/><rect x="45" y="88" width="43" height="5"/></g><rect x="2" y="23" width="61" height="61" rx="5" fill="#cfe0fa" stroke="#3374de" stroke-width="3"/><path d="M3.5 66H61.5V79a4 4 0 0 1-4 4H7.5a4 4 0 0 1-4-4Z" fill="#b3cbf2"/><text x="24" y="58" font-size="30" font-weight="bold" fill="#2a6ad9" text-anchor="middle" font-family="Liberation Sans">W</text></svg>
<svg class="ic" style="left:512px;top:901px" width="100" height="112" viewBox="0 0 100 112"><path d="M32 4a3 3 0 0 1 3-3H82L98 21V107a3 3 0 0 1-3 3H35a3 3 0 0 1-3-3Z" fill="#f3f3f3" stroke="#8e8e8e" stroke-width="2"/><path d="M82 1V18a3 3 0 0 0 3 3H98" fill="none" stroke="#8e8e8e" stroke-width="2"/><g fill="#d3dae5"><rect x="72" y="50" width="16" height="5"/><rect x="72" y="62" width="16" height="5"/><rect x="72" y="74" width="16" height="5"/><rect x="45" y="88" width="43" height="5"/></g><rect x="2" y="23" width="61" height="61" rx="5" fill="#cfe0fa" stroke="#3374de" stroke-width="3"/><path d="M3.5 66H61.5V79a4 4 0 0 1-4 4H7.5a4 4 0 0 1-4-4Z" fill="#b3cbf2"/><text x="24" y="58" font-size="30" font-weight="bold" fill="#2a6ad9" text-anchor="middle" font-family="Liberation Sans">W</text></svg>
<svg class="ic" style="left:672px;top:901px" width="100" height="112" viewBox="0 0 100 112"><path d="M32 4a3 3 0 0 1 3-3H82L98 21V107a3 3 0 0 1-3 3H35a3 3 0 0 1-3-3Z" fill="#f3f3f3" stroke="#8e8e8e" stroke-width="2"/><path d="M82 1V18a3 3 0 0 0 3 3H98" fill="none" stroke="#8e8e8e" stroke-width="2"/><g fill="#d3dae5"><rect x="72" y="50" width="16" height="5"/><rect x="72" y="62" width="16" height="5"/><rect x="72" y="74" width="16" height="5"/><rect x="45" y="88" width="43" height="5"/></g><rect x="2" y="23" width="61" height="61" rx="5" fill="#cfe0fa" stroke="#3374de" stroke-width="3"/><path d="M3.5 66H61.5V79a4 4 0 0 1-4 4H7.5a4 4 0 0 1-4-4Z" fill="#b3cbf2"/><text x="24" y="58" font-size="30" font-weight="bold" fill="#2a6ad9" text-anchor="middle" font-family="Liberation Sans">W</text></svg>
<svg class="ic" style="left:831px;top:901px" width="100" height="112" viewBox="0 0 100 112"><path d="M32 4a3 3 0 0 1 3-3H82L98 21V107a3 3 0 0 1-3 3H35a3 3 0 0 1-3-3Z" fill="#f3f3f3" stroke="#8e8e8e" stroke-width="2"/><path d="M82 1V18a3 3 0 0 0 3 3H98" fill="none" stroke="#8e8e8e" stroke-width="2"/><g fill="#d3dae5"><rect x="72" y="50" width="16" height="5"/><rect x="72" y="62" width="16" height="5"/><rect x="72" y="74" width="16" height="5"/><rect x="45" y="88" width="43" height="5"/></g><rect x="2" y="23" width="61" height="61" rx="5" fill="#cfe0fa" stroke="#3374de" stroke-width="3"/><path d="M3.5 66H61.5V79a4 4 0 0 1-4 4H7.5a4 4 0 0 1-4-4Z" fill="#b3cbf2"/><text x="24" y="58" font-size="30" font-weight="bold" fill="#2a6ad9" text-anchor="middle" font-family="Liberation Sans">W</text></svg>
</div>

<div class="g" style="left:14px;top:795px;font-size:15px">三年级语文上册<br>1.期末精选卷（<br>一）（部编版）<br>.doc</div>
<div class="g" style="left:173px;top:795px;font-size:15px">三年级语文上册<br>2.期末精选卷（<br>二）（部编版）<br>.doc</div>
<div class="g" style="left:332px;top:795px;font-size:15px">三年级语文上册<br>3.期末精选卷（<br>三）（部编版）<br>.doc</div>
<div class="g" style="left:491px;top:795px;font-size:15px">三年级语文上册<br>4.期末精选卷（<br>四）（部编版）<br>.doc</div>
<div class="g" style="left:651px;top:795px;font-size:15px">三年级语文上册<br>5.期末精选卷（<br>五）（部编版）<br>.doc</div>
<div class="g" style="left:810px;top:795px;font-size:15px">三年级语文上册<br>6.期末精选卷（<br>六）（部编版）<br>.doc</div>

<div class="a" style="left:979px;top:658px;width:20px;height:342px;background:#e6e6e6"></div>
<div class="a" style="left:979px;top:682px;width:20px;height:222px;background:#c2c2c2"></div>
<div class="a" style="left:979px;top:662px;width:20px;text-align:center;font-size:12px;color:#555;line-height:14px">&#8963;</div>

<div class="hd" style="left:1019px;top:768px">名称</div>
<div class="hd" style="left:1157px;top:754px;color:#888">^</div>
<div class="hd" style="left:1319px;top:768px">修改日期</div>
<div class="hd" style="left:1484px;top:768px">类型</div>
<div class="hd" style="left:1620px;top:768px">大小</div>
<div class="dv" style="left:1310px;top:762px;height:32px"></div>
<div class="dv" style="left:1476px;top:762px;height:32px"></div>
<div class="dv" style="left:1612px;top:762px;height:32px"></div>
<div class="dv" style="left:1704px;top:762px;height:32px"></div>

<div class="a" style="left:1000px;top:799px;width:720px;font-size:14px">
<div class="row" style="top:0px;font-size:14px"><svg style="left:20px" width="17" height="19" viewBox="0 0 17 19"><path d="M4 1H12L16 5V18H4Z" fill="#fff" stroke="#9aa3ad"/><rect x="1" y="4" width="11" height="11" rx="2" fill="#e3ecfb" stroke="#3a76dc" stroke-width="1.2"/><text x="6.5" y="13" font-size="7" font-weight="bold" fill="#3a76dc" text-anchor="middle" font-family="Liberation Sans">W</text></svg><span class="n" style="left:43px">二年级语文上册</span><span class="n" style="left:154px">【精品】1单元基础知...</span><span class="d" style="left:319px">2024/11/19 14:17</span><span class="t" style="left:483px">DOC 文档</span><span class="s" style="left:600px;width:96px">29 KB</span></div>
<div class="row" style="top:24px;font-size:14px"><svg style="left:20px" width="17" height="19" viewBox="0 0 17 19"><path d="M4 1H12L16 5V18H4Z" fill="#fff" stroke="#9aa3ad"/><rect x="1" y="4" width="11" height="11" rx="2" fill="#e3ecfb" stroke="#3a76dc" stroke-width="1.2"/><text x="6.5" y="13" font-size="7" font-weight="bold" fill="#3a76dc" text-anchor="middle" font-family="Liberation Sans">W</text></svg><span class="n" style="left:43px">二年级语文上册</span><span class="n" style="left:154px">【精品】2单元基础知...</span><span class="d" style="left:319px">2024/11/19 14:17</span><span class="t" style="left:483px">DOC 文档</span><span class="s" style="left:600px;width:96px">32 KB</span></div>
<div class="row" style="top:48px;font-size:14px"><svg style="left:20px" width="17" height="19" viewBox="0 0 17 19"><path d="M4 1H12L16 5V18H4Z" fill="#fff" stroke="#9aa3ad"/><rect x="1" y="4" width="11" height="11" rx="2" fill="#e3ecfb" stroke="#3a76dc" stroke-width="1.2"/><text x="6.5" y="13" font-size="7" font-weight="bold" fill="#3a76dc" text-anchor="middle" font-family="Liberation Sans">W</text></svg><span class="n" style="left:43px">二年级语文上册</span><span class="n" style="left:154px">【精品】3单元基础知...</span><span class="d" style="left:319px">2024/11/19 14:17</span><span class="t" style="left:483px">DOC 文档</span><span class="s" style="left:600px;width:96px">32 KB</span></div>
<div class="row" style="top:72px;font-size:14px"><svg style="left:20px" width="17" height="19" viewBox="0 0 17 19"><path d="M4 1H12L16 5V18H4Z" fill="#fff" stroke="#9aa3ad"/><rect x="1" y="4" width="11" height="11" rx="2" fill="#e3ecfb" stroke="#3a76dc" stroke-width="1.2"/><text x="6.5" y="13" font-size="7" font-weight="bold" fill="#3a76dc" text-anchor="middle" font-family="Liberation Sans">W</text></svg><span class="n" style="left:43px">二年级语文上册</span><span class="n" style="left:154px">【精品】4单元基础知...</span><span class="d" style="left:319px">2024/11/19 14:17</span><span class="t" style="left:483px">DOC 文档</span><span class="s" style="left:600px;width:96px">33 KB</span></div>
<div class="row" style="top:96px;font-size:14px"><svg style="left:20px" width="17" height="19" viewBox="0 0 17 19"><path d="M4 1H12L16 5V18H4Z" fill="#fff" stroke="#9aa3ad"/><rect x="1" y="4" width="11" height="11" rx="2" fill="#e3ecfb" stroke="#3a76dc" stroke-width="1.2"/><text x="6.5" y="13" font-size="7" font-weight="bold" fill="#3a76dc" text-anchor="middle" font-family="Liberation Sans">W</text></svg><span class="n" style="left:43px">二年级语文上册</span><span class="n" style="left:154px">【精品】5单元知识归...</span><span class="d" style="left:319px">2024/11/19 14:18</span><span class="t" style="left:483px">DOC 文档</span><span class="s" style="left:600px;width:96px">26 KB</span></div>
<div class="row" style="top:120px;font-size:14px"><svg style="left:20px" width="17" height="19" viewBox="0 0 17 19"><path d="M4 1H12L16 5V18H4Z" fill="#fff" stroke="#9aa3ad"/><rect x="1" y="4" width="11" height="11" rx="2" fill="#e3ecfb" stroke="#3a76dc" stroke-width="1.2"/><text x="6.5" y="13" font-size="7" font-weight="bold" fill="#3a76dc" text-anchor="middle" font-family="Liberation Sans">W</text></svg><span class="n" style="left:43px">二年级语文上册</span><span class="n" style="left:154px">【精品】6单元知识归...</span><span class="d" style="left:319px">2024/11/19 14:17</span><span class="t" style="left:483px">DOC 文档</span><span class="s" style="left:600px;width:96px">27 KB</span></div>
<div class="row" style="top:144px;font-size:14px"><svg style="left:20px" width="17" height="19" viewBox="0 0 17 19"><path d="M4 1H12L16 5V18H4Z" fill="#fff" stroke="#9aa3ad"/><rect x="1" y="4" width="11" height="11" rx="2" fill="#e3ecfb" stroke="#3a76dc" stroke-width="1.2"/><text x="6.5" y="13" font-size="7" font-weight="bold" fill="#3a76dc" text-anchor="middle" font-family="Liberation Sans">W</text></svg><span class="n" style="left:43px">二年级语文上册</span><span class="n" style="left:154px">【精品】7单元知识归...</span><span class="d" style="left:319px">2024/11/19 14:18</span><span class="t" style="left:483px">DOC 文档</span><span class="s" style="left:600px;width:96px">31 KB</span></div>
<div class="row" style="top:168px;font-size:14px"><svg style="left:20px" width="17" height="19" viewBox="0 0 17 19"><path d="M4 1H12L16 5V18H4Z" fill="#fff" stroke="#9aa3ad"/><rect x="1" y="4" width="11" height="11" rx="2" fill="#e3ecfb" stroke="#3a76dc" stroke-width="1.2"/><text x="6.5" y="13" font-size="7" font-weight="bold" fill="#3a76dc" text-anchor="middle" font-family="Liberation Sans">W</text></svg><span class="n" style="left:43px">二年级语文上册</span><span class="n" style="left:154px">【精品】8单元知识归...</span><span class="d" style="left:319px">2024/11/19 14:18</span><span class="t" style="left:483px">DOC 文档</span><span class="s" style="left:600px;width:96px">30 KB</span></div>
<div class="row" style="top:192px;font-size:14px"><svg style="left:20px" width="17" height="19" viewBox="0 0 17 19"><path d="M4 1H12L16 5V18H4Z" fill="#fff" stroke="#9aa3ad"/><rect x="1" y="4" width="11" height="11" rx="2" fill="#e3ecfb" stroke="#3a76dc" stroke-width="1.2"/><text x="6.5" y="13" font-size="7" font-weight="bold" fill="#3a76dc" text-anchor="middle" font-family="Liberation Sans">W</text></svg><span class="n" style="left:43px">二年级语文上册</span><span class="n" style="left:154px">部编本 · 统编版专项...</span><span class="d" style="left:319px">2024/11/19 14:18</span><span class="t" style="left:483px">DOC 文档</span><span class="s" style="left:600px;width:96px">310 KB</span></div>
</div>

<div class="a" style="left:1982px;top:763px;width:18px;height:237px;background:#e6e6e6"></div>
<div class="a" style="left:1982px;top:782px;width:18px;height:218px;background:#c4c4c4"></div>
<div class="a" style="left:1982px;top:766px;width:18px;text-align:center;font-size:12px;color:#555;line-height:14px">&#8963;</div>

<div class="wm" style="left:1720px;top:902px;font-size:36px;line-height:42px;font-family:'Noto Sans CJK SC','Liberation Sans',sans-serif;font-weight:300">zhipinquan.com</div>
<div class="wm" style="left:1712px;top:952px;font-size:34px;line-height:42px;font-family:'Noto Sans CJK SC',sans-serif;font-weight:300">百万资源免费下载</div>

</body></html>
